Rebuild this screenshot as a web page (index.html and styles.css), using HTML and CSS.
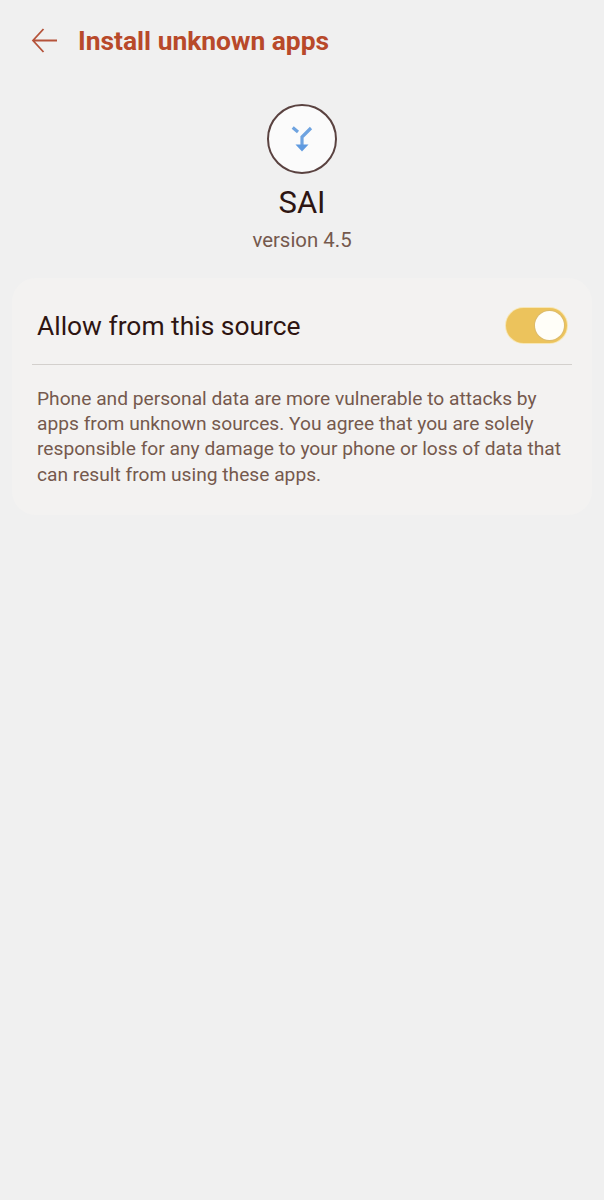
FILE: index.html
```html
<!DOCTYPE html>
<html lang="en">
<head>
<meta charset="utf-8">
<title>Install unknown apps</title>
<link rel="stylesheet" href="styles.css">
</head>
<body>
<header class="bar">
  <svg class="back" width="28" height="28" viewBox="0 0 28 28" fill="none"><path d="M3 13.500H27M13.500 2 3 13.500 13.500 25" stroke="#b5533a" stroke-width="1.800"/></svg>
  <h1 class="title">Install unknown apps</h1>
</header>
<section class="app">
  <div class="icon">
    <svg width="24" height="26" viewBox="0 0 24 26" fill="none"><path d="M2.700 1.500 8 6M21 2 12 11V21" stroke="#6ea3e0" stroke-width="3.200"/><path d="M5.500 18.500H18.500L12 25.500Z" fill="#5f9ae0"/></svg>
  </div>
  <div class="name">SAI</div>
  <div class="version">version 4.5</div>
</section>
<section class="card">
  <div class="row">
    <span class="label">Allow from this source</span>
    <span class="switch"><span class="knob"></span></span>
  </div>
  <p class="note">Phone and personal data are more vulnerable to attacks by apps from unknown sources. You agree that you are solely responsible for any damage to your phone or loss of data that can result from using these apps.</p>
</section>
</body>
</html>
```
FILE: styles.css
```css
* { box-sizing: border-box; }
html, body { margin: 0; height: 100%; }
body { background: #f0f0f0; font-family: Roboto, "Liberation Sans", sans-serif; overflow: hidden; }
.bar { display: flex; align-items: center; height: 82px; padding-left: 30px; }
.back { flex: none; margin-right: 20px; }
.title { margin: 0; font-size: 26.400px; font-weight: 700; color: #b8492a; letter-spacing: 0; }
.app { display: flex; flex-direction: column; align-items: center; padding-top: 22px; }
.icon { width: 70px; height: 70px; border-radius: 50%; border: 2px solid #5a4240; background: #fbfbfb; display: flex; align-items: center; justify-content: center; }
.name { margin-top: 10px; font-size: 31px; line-height: 38px; color: #2e1512; }
.version { margin-top: 5px; font-size: 20.400px; line-height: 26px; color: #75594d; }
.card { margin: 25px 12px 0; height: 237px; background: #f3f2f1; border-radius: 24px; padding: 0 20px; }
.row { display: flex; align-items: center; justify-content: space-between; height: 87px; padding: 8px 5px 0; border-bottom: 1px solid #d3d0cd; }
.label { font-size: 26.400px; line-height: 36px; padding-top: 2px; color: #2e1512; }
.switch { width: 61px; height: 35px; border-radius: 18px; background: #ecc35c; box-shadow: 0 0 0 1px #f7e6b4; display: flex; align-items: center; justify-content: flex-end; padding-right: 3px; }
.knob { width: 29px; height: 29px; border-radius: 50%; background: #fffef8; box-shadow: 0 0 0 1px #dcbb6c; }
.note { margin: 21px 5px 0; font-size: 19.200px; line-height: 25.200px; color: #75594d; }
```
